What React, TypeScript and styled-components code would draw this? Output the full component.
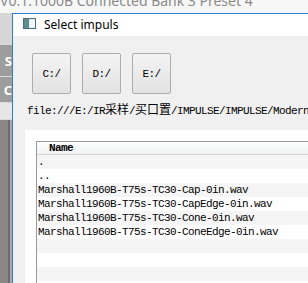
import React from 'react';
import styled, { createGlobalStyle } from 'styled-components';

const GlobalStyle = createGlobalStyle`
  html, body {
    margin: 0;
    padding: 0;
    width: 308px;
    height: 283px;
    overflow: hidden;
    background: #f3f3f3;
  }
  #root {
    width: 308px;
    height: 283px;
  }
`;

const Screen = styled.div`
  width: 308px;
  height: 283px;
  display: flex;
  flex-direction: column;
  overflow: hidden;
  font-family: 'Noto Sans', sans-serif;
`;

const AppTitle = styled.div`
  height: 13px;
  flex-shrink: 0;
  overflow: hidden;
  background: #f7f7f7;
  color: #8a8a8a;
  font-size: 14px;
  line-height: 14px;
  white-space: nowrap;
`;

const AppTitleText = styled.div`
  margin-top: -6px;
`;

const Main = styled.div`
  flex: 1;
  display: flex;
  min-height: 0;
`;

const LeftStrip = styled.div`
  width: 12px;
  flex-shrink: 0;
  display: flex;
  flex-direction: column;
  background: #878583;
`;

const StripBlock = styled.div<{ $h: number; $bg: string }>`
  height: ${p => p.$h}px;
  flex-shrink: 0;
  background: ${p => p.$bg};
  color: #ffffff;
  font-size: 13px;
  font-weight: bold;
  display: flex;
  align-items: center;
  justify-content: flex-end;
  overflow: hidden;
  border-bottom: 1px solid #d8d8d8;
`;

const StripRest = styled.div`
  flex: 1;
  background: linear-gradient(90deg, #8a8784 0, #8a8784 8px, #6f6d6b 8px, #6f6d6b 10px, #a9a9a9 10px);
`;

const Dialog = styled.div`
  flex: 1;
  min-width: 0;
  display: flex;
  flex-direction: column;
  border-left: 1px solid #2f7fd0;
  border-top: 1px solid #2f7fd0;
  background: #f0f0f0;
`;

const TitleBar = styled.div`
  height: 22px;
  flex-shrink: 0;
  background: #ffffff;
  display: flex;
  align-items: center;
  padding-left: 10px;
  gap: 8px;
  font-size: 12px;
  color: #000000;
`;

const TitleIcon = styled.svg`
  width: 13px;
  height: 11px;
  margin-top: -4px;
  flex-shrink: 0;
`;

const TitleText = styled.span`
  margin-top: -2px;
`;

const Body = styled.div`
  flex: 1;
  display: flex;
  flex-direction: column;
  padding-top: 17px;
  min-height: 0;
`;

const DriveRow = styled.div`
  display: flex;
  gap: 11px;
  padding-left: 19px;
`;

const DriveButton = styled.button`
  width: 39px;
  height: 41px;
  padding: 0;
  border: 1px solid #adadad;
  border-radius: 2px;
  background: linear-gradient(#f4f4f4, #e2e2e2);
  font-family: 'Liberation Mono', 'Noto Sans CJK SC', monospace;
  font-size: 11px;
  letter-spacing: -0.6px;
  color: #000000;
`;

const PathLine = styled.div`
  margin-top: 8px;
  padding-left: 14px;
  height: 16px;
  line-height: 16px;
  white-space: nowrap;
  font-family: 'Liberation Mono', 'Noto Sans CJK SC', monospace;
  font-size: 11px;
  letter-spacing: -0.6px;
  color: #000000;
`;

const Wide = styled.span`
  font-family: 'Noto Sans CJK SC', sans-serif;
  font-size: 12px;
  line-height: 14px;
  letter-spacing: 0;
`;

const Panel = styled.div`
  flex: 1;
  margin-top: 12px;
  margin-left: 12px;
  background: #ffffff;
  padding: 11px 0 0 11px;
  display: flex;
  min-height: 0;
`;

const ListView = styled.div`
  flex: 1;
  border-left: 1px solid #9a9a9a;
  border-top: 1px solid #9a9a9a;
  overflow: hidden;
  font-family: 'Liberation Mono', 'Noto Sans CJK SC', monospace;
  font-size: 11px;
  letter-spacing: -0.6px;
  color: #000000;
`;

const Header = styled.div`
  height: 12px;
  line-height: 12px;
  padding-left: 12px;
  background: linear-gradient(#ffffff, #f1f2f4);
  border-bottom: 1px solid #d5d5d5;
  font-weight: bold;
`;

const Row = styled.div<{ $alt: boolean }>`
  height: 14px;
  line-height: 14px;
  padding-left: 1px;
  white-space: nowrap;
  background: ${p => (p.$alt ? '#f5f5f5' : '#ffffff')};
`;

const files = [
  '.',
  '..',
  'Marshall1960B-T75s-TC30-Cap-0in.wav',
  'Marshall1960B-T75s-TC30-CapEdge-0in.wav',
  'Marshall1960B-T75s-TC30-Cone-0in.wav',
  'Marshall1960B-T75s-TC30-ConeEdge-0in.wav',
  '',
  '',
  '',
];

const App: React.FC = () => {
  return (
    <>
      <GlobalStyle />
      <Screen>
        <AppTitle>
          <AppTitleText>V0.1.1000B Connected Bank 3 Preset 4</AppTitleText>
        </AppTitle>
        <Main>
          <LeftStrip>
            <StripBlock $h={31} $bg="#d6d6d6" />
            <StripBlock $h={31} $bg="#9d9d9d">S</StripBlock>
            <StripBlock $h={25} $bg="#9d9d9d">C</StripBlock>
            <StripBlock $h={16} $bg="#e6e6e6" />
            <StripRest />
          </LeftStrip>
          <Dialog>
            <TitleBar>
              <TitleIcon viewBox="0 0 13 11">
                <rect x="0.5" y="0.5" width="12" height="10" fill="#e3ecee" stroke="#4f6d74" />
                <rect x="1" y="1" width="5" height="9" fill="#5d8d90" />
                <rect x="7" y="2" width="5" height="7" fill="#f4f8f8" />
              </TitleIcon>
              <TitleText>Select impuls</TitleText>
            </TitleBar>
            <Body>
              <DriveRow>
                <DriveButton>C:/</DriveButton>
                <DriveButton>D:/</DriveButton>
                <DriveButton>E:/</DriveButton>
              </DriveRow>
              <PathLine>
                file:///E:/IR<Wide>采样</Wide>/<Wide>买口置</Wide>/IMPULSE/IMPULSE/Modern/Marshall
              </PathLine>
              <Panel>
                <ListView>
                  <Header>Name</Header>
                  {files.map((f, i) => (
                    <Row key={i} $alt={i % 2 === 0}>{f}</Row>
                  ))}
                </ListView>
              </Panel>
            </Body>
          </Dialog>
        </Main>
      </Screen>
    </>
  );
};

export default App;
